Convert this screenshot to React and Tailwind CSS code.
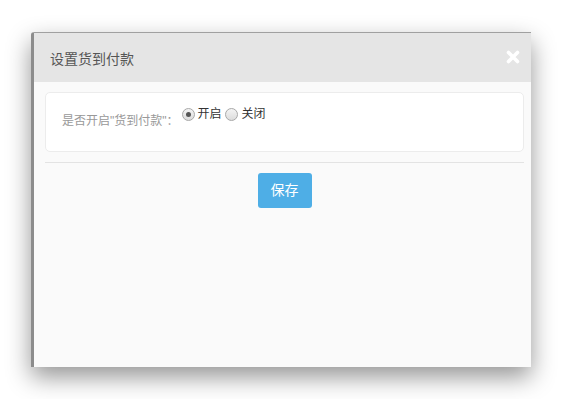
import React, { useState } from 'react';

function Radio({ checked }) {
  return (
    <span className="inline-flex w-[13px] h-[13px] rounded-full border border-[#a8a8a8] bg-gradient-to-b from-[#f4f4f4] to-[#dcdcdc] items-center justify-center">
      {checked && <span className="w-[5px] h-[5px] rounded-full bg-[#555]" />}
    </span>
  );
}

export default function App() {
  const [enabled, setEnabled] = useState(true);

  return (
    <div className="w-[563px] h-[399px] bg-white pt-[32px] pl-[31px] font-['Liberation_Sans','Noto_Sans_CJK_SC',sans-serif]">
      <div className="w-[500px] h-[335px] bg-[#fafafa] border-l-[3px] border-l-[#8c8c8c] border-t border-t-[#a0a0a0] rounded-tl-[3px] shadow-[0_10px_24px_rgba(0,0,0,0.42)] flex flex-col">
        {/* header */}
        <div className="h-[49px] bg-[#e5e5e5] flex items-center justify-between pl-[16px] pr-[11px]">
          <span className="text-[14px] text-[#555] pt-[3px]">设置货到付款</span>
          <svg width="14" height="14" viewBox="0 0 14 14" className="mt-[-2px]">
            <path d="M2.5 2.5 L11.5 11.5 M11.5 2.5 L2.5 11.5" stroke="#fff" strokeWidth="3.6" strokeLinecap="round" />
          </svg>
        </div>

        {/* body */}
        <div className="ml-[11px] mr-[7px] mt-[10px]">
          <div className="h-[60px] bg-white border border-[#ececec] rounded-[5px] flex items-start pl-[16px] pt-[12px]">
            <span className="text-[12px] text-[#999] mt-[7px]">是否开启"货到付款"：</span>
            <label className="flex items-center ml-[3px] text-[12px] text-[#333]" onClick={() => setEnabled(true)}>
              <Radio checked={enabled} />
              <span className="ml-[3px]">开启</span>
            </label>
            <label className="flex items-center ml-[3px] text-[12px] text-[#333]" onClick={() => setEnabled(false)}>
              <Radio checked={!enabled} />
              <span className="ml-[4px]">关闭</span>
            </label>
          </div>

          <div className="mt-[10px] border-t border-[#e3e3e3]" />

          <div className="flex justify-center mt-[10px]">
            <button className="w-[54px] h-[35px] rounded-[3px] bg-[#4eaee6] text-white text-[14px]">
              保存
            </button>
          </div>
        </div>
      </div>
    </div>
  );
}
